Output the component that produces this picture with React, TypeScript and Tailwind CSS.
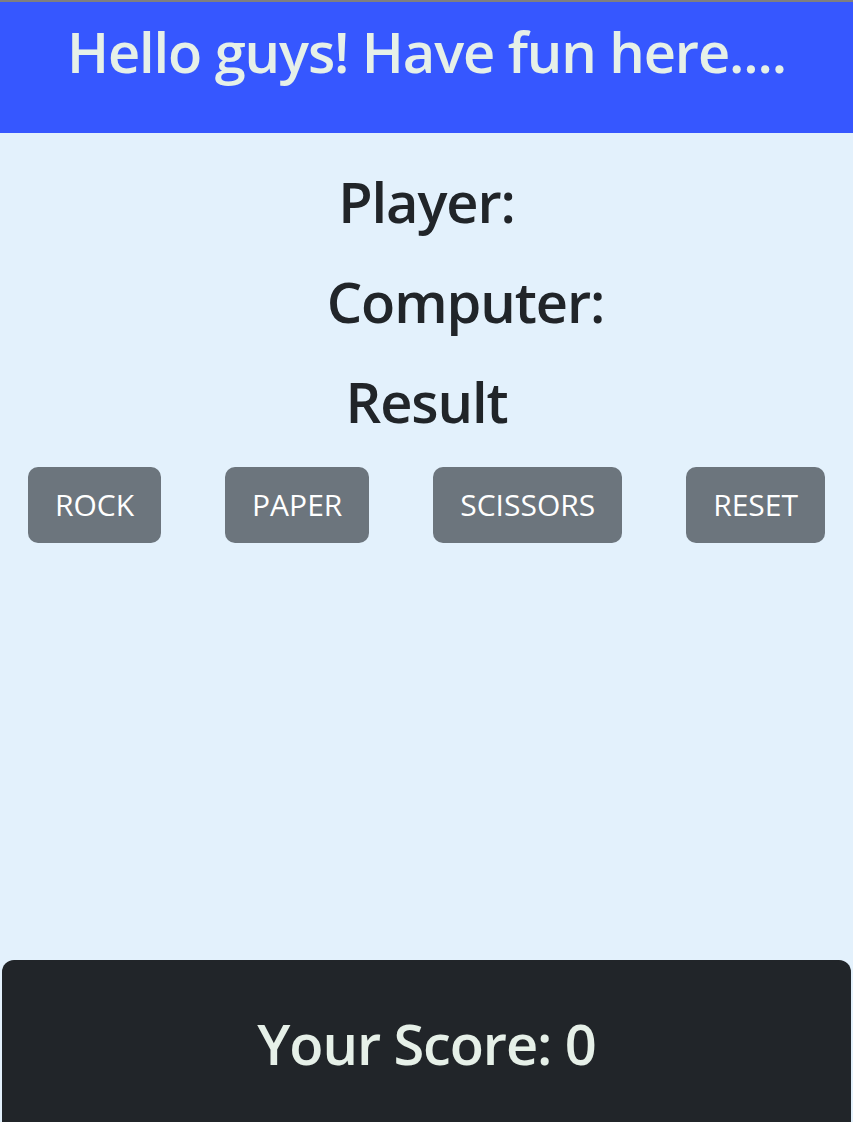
import React from "react";

// ─── Rock / paper / scissors page ────────────────────────────────────────────

const choices = ["ROCK", "PAPER", "SCISSORS", "RESET"];

function ChoiceButton({ label }: { label: string }) {
  return (
    <button
      type="button"
      className="flex h-[76px] items-center rounded-[10px] bg-[#6c757d] px-[27px] text-[30px] font-normal leading-[45px] text-white"
    >
      {label}
    </button>
  );
}

export default function App() {
  return (
    <div
      className="w-full min-h-screen overflow-hidden bg-[#e3f1fc] text-[#212529]"
      style={{ fontFamily: '"Open Sans", "Noto Sans", sans-serif' }}
    >
      <header className="h-[133px] border-t-2 border-[#7f7f7f] bg-[#3657ff] pt-[16px]">
        <h1 className="text-center text-[56px] font-semibold leading-[1.2] tracking-[-1.1px] text-[#e6f0e8]">
          Hello guys! Have fun here....
        </h1>
      </header>

      <main className="h-[827px] pt-[35px]">
        <div className="flex flex-col gap-[33px] tracking-[-1.1px]">
          <h2 className="text-center text-[56px] font-semibold leading-[1.2]">Player:</h2>
          <h2 className="pl-[78px] text-center text-[56px] font-semibold leading-[1.2]">Computer:</h2>
          <h2 className="text-center text-[56px] font-semibold leading-[1.2]">Result</h2>
        </div>

        <div className="mt-[31px] flex justify-between px-[28px]">
          {choices.map((c) => (
            <ChoiceButton key={c} label={c} />
          ))}
        </div>
      </main>

      <footer className="mx-[2px] rounded-t-[12px] bg-[#212529] py-[50px]">
        <h2 className="text-center text-[56px] font-semibold leading-[1.2] tracking-[-1.1px] text-[#e6f0e8]">
          Your Score: 0
        </h2>
      </footer>
    </div>
  );
}
